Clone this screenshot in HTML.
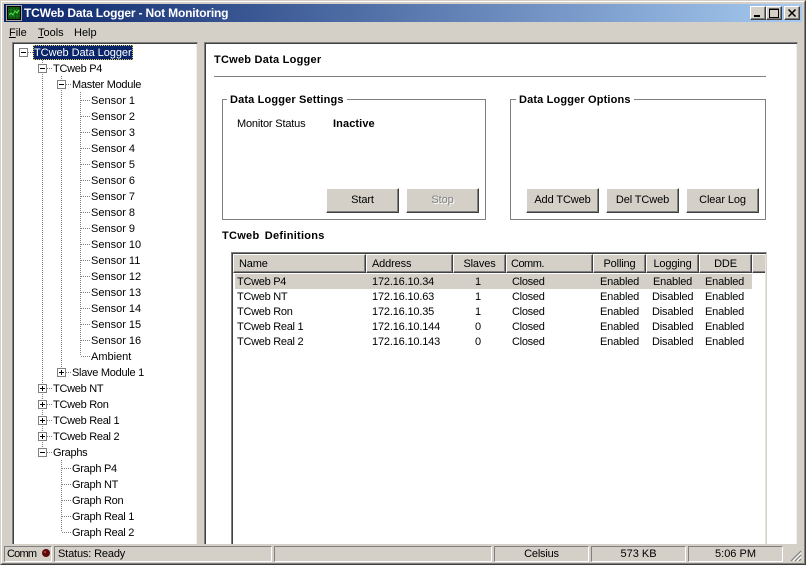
<!DOCTYPE html>
<html><head><meta charset="utf-8"><title>TCWeb Data Logger</title>
<style>
html,body{margin:0;padding:0}
body{width:806px;height:565px;overflow:hidden;position:relative;background:#d4d0c8;font-family:"Liberation Sans",sans-serif;font-size:11px;color:#000}
div{position:absolute;box-sizing:border-box}
.t{white-space:nowrap;line-height:14px;height:14px;margin-top:1px}
.n{letter-spacing:-.28px}
.l{letter-spacing:-.18px}
.b{font-weight:bold}
.btn{background:#d4d0c8;border-top:1px solid #fff;border-left:1px solid #fff;border-right:1px solid #404040;border-bottom:1px solid #404040;text-align:center;line-height:22px;height:25px;width:73px;top:188px;box-shadow:inset -1px -1px 0 #808080;letter-spacing:-.1px}
.gb{border:1px solid #808080;top:99px;height:121px}
.lg{background:#fff;top:93px;height:14px;line-height:14px;font-weight:bold;white-space:nowrap;padding:0 3px;letter-spacing:.15px}
.h{top:254px;height:19px;background:#d4d0c8;border-right:1px solid #404040;border-bottom:1px solid #404040;border-top:1px solid #fff;border-left:1px solid #fff;box-shadow:inset -1px -1px 0 #808080;line-height:18px;white-space:nowrap;padding-left:5px;letter-spacing:-.15px}
.sb{top:546px;height:16px;border-top:1px solid #808080;border-left:1px solid #808080;border-right:1px solid #fff;border-bottom:1px solid #fff;line-height:14px;white-space:nowrap;text-align:center}
.wb{top:6px;width:16px;height:14px;background:#d4d0c8;border-top:1px solid #fff;border-left:1px solid #fff;border-right:1px solid #404040;border-bottom:1px solid #404040;box-shadow:inset -1px -1px 0 #808080}
.pane{top:42px;height:502px;background:#fff;border-top:1px solid #808080;border-left:1px solid #808080;border-right:1px solid #d4d0c8;box-shadow:inset 1px 1px 0 #404040,inset -1px 0 0 #f0eee8}
</style></head><body>
<!-- window frame -->
<div style="left:0;top:0;width:806px;height:565px;border-top:1px solid #d4d0c8;border-left:1px solid #d4d0c8;border-right:1px solid #404040;border-bottom:1px solid #404040"></div>
<div style="left:1px;top:1px;width:804px;height:563px;border-top:1px solid #fff;border-left:1px solid #fff;border-right:1px solid #808080;border-bottom:1px solid #808080"></div>
<!-- title bar -->
<div style="left:4px;top:4px;width:798px;height:18px;background:linear-gradient(90deg,#0a246a,#a6caf0)"></div>
<svg style="position:absolute;left:6px;top:5px" width="16" height="16" shape-rendering="crispEdges"><rect width="16" height="16" fill="#a8a8a0"/><rect x="1" y="1" width="14" height="14" fill="#000"/><rect x="2" y="2" width="12" height="12" fill="#0a4a0a"/><path d="M2 5H14M2 8H14M2 11H14M5 2V14M8 2V14M11 2V14" stroke="#1c7a1c"/><path d="M3 10L5 8L7 10L9 6L11 8L13 5" stroke="#3fdc3f" fill="none"/></svg>
<div class="t b" style="left:24px;top:6px;margin-top:0;font-size:12px;letter-spacing:-.18px;color:#fff;line-height:15px;height:15px">TCWeb Data Logger - Not Monitoring</div>
<div class="wb" style="left:750px"><svg style="position:absolute;left:3px;top:8px" width="8" height="3"><rect width="6" height="2" fill="#000"/></svg></div>
<div class="wb" style="left:766px"><svg style="position:absolute;left:2px;top:1px" width="10" height="10" shape-rendering="crispEdges"><path d="M0.5 1.5H9.5V9.5H0.5Z M0 1H10" fill="none" stroke="#000"/></svg></div>
<div class="wb" style="left:784px"><svg style="position:absolute;left:3px;top:2px" width="9" height="8"><path d="M0.5 0.5L7.5 7.5M7.5 0.5L0.5 7.5" stroke="#000" stroke-width="1.5"/></svg></div>
<!-- menu -->
<div class="t" style="left:9px;top:25px"><u>F</u>ile</div>
<div class="t" style="left:38px;top:25px"><u>T</u>ools</div>
<div class="t" style="left:74px;top:25px">Help</div>
<!-- tree pane -->
<div class="pane" style="left:12px;width:186px"></div>
<!-- right pane -->
<div class="pane" style="left:204px;width:594px"></div>
<!-- tree lines -->
<svg style="position:absolute;left:0;top:0" width="200" height="544" shape-rendering="crispEdges">
<g stroke="#808080" stroke-dasharray="1 1" fill="none">
<path d="M42.5 60V448"/><path d="M61.5 76V368"/><path d="M80.5 92V356"/><path d="M61.5 460V532"/>
<path d="M28 52.5H33M47 68.5H52M66 84.5H71M66 372.5H71M47 388.5H52M47 404.5H52M47 420.5H52M47 436.5H52M47 452.5H52"/>
<path d="M81 100.5H90M81 116.5H90M81 132.5H90M81 148.5H90M81 164.5H90M81 180.5H90M81 196.5H90M81 212.5H90M81 228.5H90M81 244.5H90M81 260.5H90M81 276.5H90M81 292.5H90M81 308.5H90M81 324.5H90M81 340.5H90M81 356.5H90"/>
<path d="M62 468.5H71M62 484.5H71M62 500.5H71M62 516.5H71M62 532.5H71"/>
</g>
<g fill="#fff" stroke="#808080">
<rect x="19.5" y="48.5" width="8" height="8"/><rect x="38.5" y="64.5" width="8" height="8"/><rect x="57.5" y="80.5" width="8" height="8"/><rect x="57.5" y="368.5" width="8" height="8"/><rect x="38.5" y="384.5" width="8" height="8"/><rect x="38.5" y="400.5" width="8" height="8"/><rect x="38.5" y="416.5" width="8" height="8"/><rect x="38.5" y="432.5" width="8" height="8"/><rect x="38.5" y="448.5" width="8" height="8"/>
</g>
<g stroke="#000" fill="none">
<path d="M21 52.5H26M40 68.5H45M59 84.5H64M59 372.5H64M40 388.5H45M40 404.5H45M40 420.5H45M40 436.5H45M40 452.5H45"/>
<path d="M61.5 370V375M42.5 386V391M42.5 402V407M42.5 418V423M42.5 434V439"/>
</g>
</svg>
<!-- tree text -->
<div style="left:33px;top:45px;width:100px;height:15px;background:#0a246a;outline:1px dotted #d8c860;outline-offset:-1px"></div>
<div class="t" style="left:34px;top:45px;color:#fff;letter-spacing:-.05px">TCweb Data Logger</div>
<div class="t n" style="left:53px;top:61px">TCweb P4</div>
<div class="t n" style="left:72px;top:77px">Master Module</div>
<div class="t" style="left:91px;top:93px">Sensor 1</div>
<div class="t" style="left:91px;top:109px">Sensor 2</div>
<div class="t" style="left:91px;top:125px">Sensor 3</div>
<div class="t" style="left:91px;top:141px">Sensor 4</div>
<div class="t" style="left:91px;top:157px">Sensor 5</div>
<div class="t" style="left:91px;top:173px">Sensor 6</div>
<div class="t" style="left:91px;top:189px">Sensor 7</div>
<div class="t" style="left:91px;top:205px">Sensor 8</div>
<div class="t" style="left:91px;top:221px">Sensor 9</div>
<div class="t" style="left:91px;top:237px">Sensor 10</div>
<div class="t" style="left:91px;top:253px">Sensor 11</div>
<div class="t" style="left:91px;top:269px">Sensor 12</div>
<div class="t" style="left:91px;top:285px">Sensor 13</div>
<div class="t" style="left:91px;top:301px">Sensor 14</div>
<div class="t" style="left:91px;top:317px">Sensor 15</div>
<div class="t" style="left:91px;top:333px">Sensor 16</div>
<div class="t" style="left:91px;top:349px">Ambient</div>
<div class="t n" style="left:72px;top:365px">Slave Module 1</div>
<div class="t n" style="left:53px;top:381px">TCweb NT</div>
<div class="t n" style="left:53px;top:397px">TCweb Ron</div>
<div class="t n" style="left:53px;top:413px">TCweb Real 1</div>
<div class="t n" style="left:53px;top:429px">TCweb Real 2</div>
<div class="t n" style="left:53px;top:445px">Graphs</div>
<div class="t n" style="left:72px;top:461px">Graph P4</div>
<div class="t n" style="left:72px;top:477px">Graph NT</div>
<div class="t n" style="left:72px;top:493px">Graph Ron</div>
<div class="t n" style="left:72px;top:509px">Graph Real 1</div>
<div class="t n" style="left:72px;top:525px">Graph Real 2</div>
<!-- right content -->
<div class="t b" style="left:214px;top:52px;letter-spacing:.24px">TCweb Data Logger</div>
<div style="left:214px;top:76px;width:552px;height:1px;background:#808080"></div>
<div class="gb" style="left:222px;width:264px"></div>
<div class="lg" style="left:227px">Data Logger Settings</div>
<div class="t l" style="left:237px;top:116px">Monitor Status</div>
<div class="t b" style="left:333px;top:116px;letter-spacing:.1px">Inactive</div>
<div class="btn" style="left:326px">Start</div>
<div class="btn" style="left:406px;color:#808080;text-shadow:1px 1px 0 #fff">Stop</div>
<div class="gb" style="left:510px;width:256px"></div>
<div class="lg" style="left:516px">Data Logger Options</div>
<div class="btn" style="left:526px">Add TCweb</div>
<div class="btn" style="left:606px">Del TCweb</div>
<div class="btn" style="left:686px">Clear Log</div>
<div class="t b" style="left:222px;top:228px;word-spacing:2px;letter-spacing:.28px">TCweb Definitions</div>
<!-- list -->
<div style="left:231px;top:252px;width:536px;height:292px;background:#fff;border-top:1px solid #808080;border-left:1px solid #808080;border-right:1px solid #d4d0c8;box-shadow:inset 1px 1px 0 #404040,inset -1px 0 0 #e8e6e0"></div>
<div class="h" style="left:233px;width:133px">Name</div>
<div class="h" style="left:366px;width:87px">Address</div>
<div class="h" style="left:453px;width:53px;text-align:center;padding-left:0">Slaves</div>
<div class="h" style="left:506px;width:87px;padding-left:4px;letter-spacing:-.5px">Comm.</div>
<div class="h" style="left:593px;width:53px;text-align:center;padding-left:0">Polling</div>
<div class="h" style="left:646px;width:53px;text-align:center;padding-left:0">Logging</div>
<div class="h" style="left:699px;width:53px;text-align:center;padding-left:0">DDE</div>
<div class="h" style="left:752px;width:13px;border-right:0;box-shadow:inset 0 -1px 0 #808080"></div>
<div style="left:235px;top:274px;width:517px;height:15px;background:#d4d0c8"></div>
<div class="t n" style="left:237px;top:274px">TCweb P4</div><div class="t l" style="left:372px;top:274px">172.16.10.34</div><div class="t" style="left:475px;top:274px">1</div><div class="t n" style="left:512px;top:274px">Closed</div><div class="t l" style="left:600px;top:274px">Enabled</div><div class="t l" style="left:653px;top:274px">Enabled</div><div class="t l" style="left:705px;top:274px">Enabled</div>
<div class="t n" style="left:237px;top:289px">TCweb NT</div><div class="t l" style="left:372px;top:289px">172.16.10.63</div><div class="t" style="left:475px;top:289px">1</div><div class="t n" style="left:512px;top:289px">Closed</div><div class="t l" style="left:600px;top:289px">Enabled</div><div class="t l" style="left:652px;top:289px">Disabled</div><div class="t l" style="left:705px;top:289px">Enabled</div>
<div class="t n" style="left:237px;top:304px">TCweb Ron</div><div class="t l" style="left:372px;top:304px">172.16.10.35</div><div class="t" style="left:475px;top:304px">1</div><div class="t n" style="left:512px;top:304px">Closed</div><div class="t l" style="left:600px;top:304px">Enabled</div><div class="t l" style="left:652px;top:304px">Disabled</div><div class="t l" style="left:705px;top:304px">Enabled</div>
<div class="t n" style="left:237px;top:319px">TCweb Real 1</div><div class="t l" style="left:372px;top:319px">172.16.10.144</div><div class="t" style="left:475px;top:319px">0</div><div class="t n" style="left:512px;top:319px">Closed</div><div class="t l" style="left:600px;top:319px">Enabled</div><div class="t l" style="left:652px;top:319px">Disabled</div><div class="t l" style="left:705px;top:319px">Enabled</div>
<div class="t n" style="left:237px;top:334px">TCweb Real 2</div><div class="t l" style="left:372px;top:334px">172.16.10.143</div><div class="t" style="left:475px;top:334px">0</div><div class="t n" style="left:512px;top:334px">Closed</div><div class="t l" style="left:600px;top:334px">Enabled</div><div class="t l" style="left:652px;top:334px">Disabled</div><div class="t l" style="left:705px;top:334px">Enabled</div>
<!-- status bar -->
<div class="sb" style="left:4px;width:48px;text-align:left;padding-left:2px;letter-spacing:-.8px">Comm</div>
<svg style="position:absolute;left:41px;top:548px" width="10" height="10"><circle cx="5" cy="5" r="4" fill="#5a0808"/><circle cx="4" cy="4" r="1.3" fill="#b03030"/></svg>
<div class="sb" style="left:54px;width:218px;text-align:left;padding-left:3px;letter-spacing:-.15px">Status: Ready</div>
<div class="sb" style="left:274px;width:218px"></div>
<div class="sb" style="left:494px;width:95px;letter-spacing:-.2px">Celsius</div>
<div class="sb" style="left:591px;width:95px">573 KB</div>
<div class="sb" style="left:688px;width:95px">5:06 PM</div>
<svg style="position:absolute;left:790px;top:550px" width="12" height="12"><path d="M11 1L1 11M11 5L5 11M11 9L9 11" stroke="#808080" stroke-width="1.2" fill="none"/><path d="M11 3L3 11M11 7L7 11" stroke="#fff" fill="none"/></svg>
</body></html>
